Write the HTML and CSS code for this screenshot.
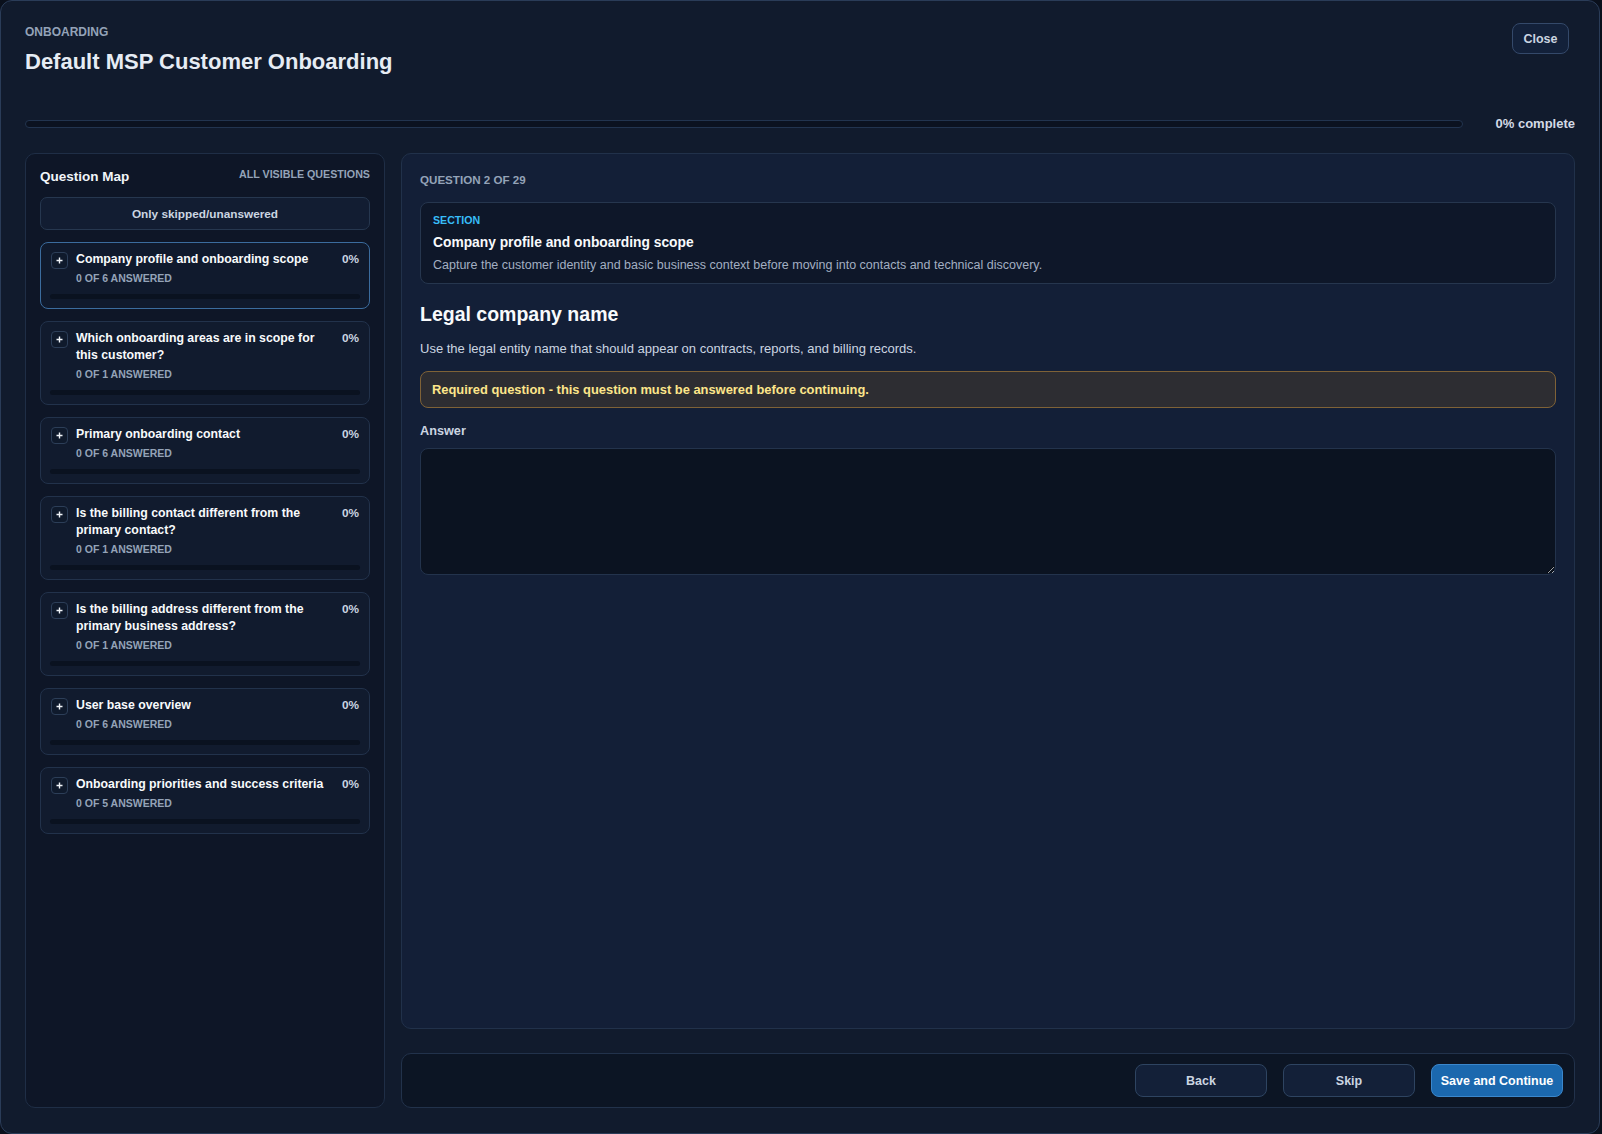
FILE: index.html
```html
<!DOCTYPE html>
<html lang="en">
<head>
<meta charset="utf-8">
<title>Default MSP Customer Onboarding</title>
<link rel="stylesheet" href="styles.css">
</head>
<body>
<div class="modal">
  <header class="modal-head">
    <div class="head-text">
      <div class="eyebrow">ONBOARDING</div>
      <h1 class="title">Default MSP Customer Onboarding</h1>
    </div>
    <button class="btn btn-close" type="button">Close</button>
  </header>

  <div class="progress-row">
    <div class="progress-track"><div class="progress-fill" style="width:0%"></div></div>
    <div class="progress-label">0% complete</div>
  </div>

  <div class="layout">
    <aside class="map">
      <div class="map-head">
        <span class="map-title">Question Map</span>
        <span class="map-scope">ALL VISIBLE QUESTIONS</span>
      </div>
      <button class="filter-btn" type="button">Only skipped/unanswered</button>
      <ul class="map-list">
        <li class="map-card active">
          <div class="card-row">
            <span class="plus"><svg width="7" height="7" viewBox="0 0 7 7"><path d="M3.5 0.5v6M0.5 3.5h6" stroke="#f1f5f9" stroke-width="1.4"/></svg></span>
            <div class="card-text">
              <div class="card-title">Company profile and onboarding scope</div>
              <div class="card-sub">0 OF 6 ANSWERED</div>
            </div>
            <span class="card-pct">0%</span>
          </div>
          <div class="card-bar"></div>
        </li>
        <li class="map-card">
          <div class="card-row">
            <span class="plus"><svg width="7" height="7" viewBox="0 0 7 7"><path d="M3.5 0.5v6M0.5 3.5h6" stroke="#f1f5f9" stroke-width="1.4"/></svg></span>
            <div class="card-text">
              <div class="card-title">Which onboarding areas are in scope for this customer?</div>
              <div class="card-sub">0 OF 1 ANSWERED</div>
            </div>
            <span class="card-pct">0%</span>
          </div>
          <div class="card-bar"></div>
        </li>
        <li class="map-card">
          <div class="card-row">
            <span class="plus"><svg width="7" height="7" viewBox="0 0 7 7"><path d="M3.5 0.5v6M0.5 3.5h6" stroke="#f1f5f9" stroke-width="1.4"/></svg></span>
            <div class="card-text">
              <div class="card-title">Primary onboarding contact</div>
              <div class="card-sub">0 OF 6 ANSWERED</div>
            </div>
            <span class="card-pct">0%</span>
          </div>
          <div class="card-bar"></div>
        </li>
        <li class="map-card">
          <div class="card-row">
            <span class="plus"><svg width="7" height="7" viewBox="0 0 7 7"><path d="M3.5 0.5v6M0.5 3.5h6" stroke="#f1f5f9" stroke-width="1.4"/></svg></span>
            <div class="card-text">
              <div class="card-title">Is the billing contact different from the primary contact?</div>
              <div class="card-sub">0 OF 1 ANSWERED</div>
            </div>
            <span class="card-pct">0%</span>
          </div>
          <div class="card-bar"></div>
        </li>
        <li class="map-card">
          <div class="card-row">
            <span class="plus"><svg width="7" height="7" viewBox="0 0 7 7"><path d="M3.5 0.5v6M0.5 3.5h6" stroke="#f1f5f9" stroke-width="1.4"/></svg></span>
            <div class="card-text">
              <div class="card-title">Is the billing address different from the primary business address?</div>
              <div class="card-sub">0 OF 1 ANSWERED</div>
            </div>
            <span class="card-pct">0%</span>
          </div>
          <div class="card-bar"></div>
        </li>
        <li class="map-card">
          <div class="card-row">
            <span class="plus"><svg width="7" height="7" viewBox="0 0 7 7"><path d="M3.5 0.5v6M0.5 3.5h6" stroke="#f1f5f9" stroke-width="1.4"/></svg></span>
            <div class="card-text">
              <div class="card-title">User base overview</div>
              <div class="card-sub">0 OF 6 ANSWERED</div>
            </div>
            <span class="card-pct">0%</span>
          </div>
          <div class="card-bar"></div>
        </li>
        <li class="map-card">
          <div class="card-row">
            <span class="plus"><svg width="7" height="7" viewBox="0 0 7 7"><path d="M3.5 0.5v6M0.5 3.5h6" stroke="#f1f5f9" stroke-width="1.4"/></svg></span>
            <div class="card-text">
              <div class="card-title">Onboarding priorities and success criteria</div>
              <div class="card-sub">0 OF 5 ANSWERED</div>
            </div>
            <span class="card-pct">0%</span>
          </div>
          <div class="card-bar"></div>
        </li>
      </ul>
    </aside>

    <section class="main-col">
      <div class="question-panel">
        <div class="q-counter">QUESTION 2 OF 29</div>
        <div class="section-box">
          <div class="section-label">SECTION</div>
          <div class="section-title">Company profile and onboarding scope</div>
          <div class="section-desc">Capture the customer identity and basic business context before moving into contacts and technical discovery.</div>
        </div>
        <h2 class="q-title">Legal company name</h2>
        <p class="q-desc">Use the legal entity name that should appear on contracts, reports, and billing records.</p>
        <div class="required">Required question - this question must be answered before continuing.</div>
        <label class="answer-label" for="answer">Answer</label>
        <textarea id="answer" class="answer-input"></textarea>
      </div>
      <div class="footer-bar">
        <button class="btn btn-secondary" type="button">Back</button>
        <button class="btn btn-secondary" type="button">Skip</button>
        <button class="btn btn-primary" type="button">Save and Continue</button>
      </div>
    </section>
  </div>
</div>
</body>
</html>
```

FILE: styles.css
```css
html, body {
  margin: 0;
  padding: 0;
  height: 100%;
  background: #0a101c;
}

body {
  font-family: "Liberation Sans", Arial, sans-serif;
  color: #e2e8f0;
}

.modal {
  box-sizing: border-box;
  width: 1600px;
  height: 1134px;
  border: 1px solid #2a3c58;
  border-radius: 12px;
  background: #111b2d;
  padding: 23px 24px 25px 24px;
  display: flex;
  flex-direction: column;
}

/* Header */
.modal-head {
  display: flex;
  justify-content: space-between;
  align-items: flex-start;
  height: 50px;
}

.eyebrow {
  font-size: 12px;
  font-weight: 700;
  line-height: 16px;
  color: #94a3b8;
}

.title {
  margin: 8px 0 0 0;
  font-size: 22px;
  font-weight: 700;
  line-height: 28px;
  color: #e6ecf4;
}

.btn {
  font-family: "Liberation Sans", Arial, sans-serif;
  font-weight: 700;
  cursor: pointer;
  box-sizing: border-box;
}

.btn-close {
  margin: -1px 6px 0 0;
  width: 57px;
  height: 31px;
  padding: 0;
  border: 1px solid #34496a;
  border-radius: 8px;
  background: #13213a;
  color: #cbd5e1;
  font-size: 12.5px;
}

/* Progress */
.progress-row {
  margin-top: 41px;
  display: flex;
  align-items: center;
  gap: 33px;
  height: 18px;
}

.progress-track {
  flex: 1;
  box-sizing: border-box;
  height: 8px;
  border: 1px solid #22344f;
  border-radius: 999px;
  background: #0b1220;
  overflow: hidden;
}

.progress-fill {
  height: 100%;
  background: #1d6fb8;
}

.progress-label {
  font-size: 13px;
  font-weight: 700;
  line-height: 18px;
  color: #d3dae5;
}

/* Layout */
.layout {
  flex: 1;
  min-height: 0;
  margin-top: 20px;
  display: grid;
  grid-template-columns: 360px 1fr;
  gap: 16px;
}

/* Question map */
.map {
  box-sizing: border-box;
  background: #0e1627;
  border: 1px solid #1f2e46;
  border-radius: 10px;
  padding: 14px;
}

.map-head {
  display: flex;
  justify-content: space-between;
  align-items: flex-start;
}

.map-title {
  font-size: 13.5px;
  font-weight: 700;
  line-height: 18px;
  color: #f1f5f9;
}

.map-scope {
  font-size: 10.7px;
  font-weight: 700;
  line-height: 13px;
  color: #94a3b8;
}

.filter-btn {
  display: block;
  width: 100%;
  height: 33px;
  margin-top: 11px;
  padding: 0;
  background: #121d32;
  border: 1px solid #26374f;
  border-radius: 7px;
  color: #cbd5e1;
  font-family: "Liberation Sans", Arial, sans-serif;
  font-size: 11.8px;
  font-weight: 700;
}

.map-list {
  list-style: none;
  margin: 12px 0 0 0;
  padding: 0;
  display: flex;
  flex-direction: column;
  gap: 12px;
}

.map-card {
  background: #111b2e;
  border: 1px solid #22324b;
  border-radius: 8px;
  padding: 8px 10px 9px 10px;
}

.map-card.active {
  border-color: #3b6c9e;
  background: #101a2d;
}

.card-row {
  display: flex;
  align-items: flex-start;
  gap: 8px;
}

.plus {
  flex: none;
  box-sizing: border-box;
  width: 17px;
  height: 17px;
  margin-top: 1px;
  border: 1px solid #2c3e58;
  border-radius: 4px;
  background: #0f1a2c;
  display: flex;
  align-items: center;
  justify-content: center;
}

.card-text {
  flex: 1;
  min-width: 0;
}

.card-title {
  font-size: 12.3px;
  font-weight: 700;
  line-height: 17px;
  color: #f8fafc;
}

.card-sub {
  margin-top: 3px;
  font-size: 10.5px;
  font-weight: 700;
  line-height: 14px;
  color: #94a3b8;
}

.card-pct {
  flex: none;
  font-size: 11.8px;
  font-weight: 700;
  line-height: 17px;
  color: #cbd5e1;
}

.card-bar {
  height: 5px;
  margin: 9px -1px 0 -1px;
  border-radius: 3px;
  background: #0a1220;
}

/* Main column */
.main-col {
  display: flex;
  flex-direction: column;
  gap: 24px;
  min-height: 0;
}

.question-panel {
  flex: 1;
  background: #131f37;
  border: 1px solid #21314a;
  border-radius: 10px;
  padding: 18px;
}

.q-counter {
  font-size: 11.6px;
  font-weight: 700;
  line-height: 15px;
  color: #94a3b8;
}

.section-box {
  margin-top: 15px;
  background: #0e1729;
  border: 1px solid #26364e;
  border-radius: 8px;
  padding: 10px 12px 9px 12px;
}

.section-label {
  font-size: 10.6px;
  font-weight: 700;
  line-height: 14px;
  color: #38bdf8;
}

.section-title {
  margin-top: 7px;
  font-size: 13.8px;
  font-weight: 700;
  line-height: 18px;
  color: #f8fafc;
}

.section-desc {
  margin-top: 5px;
  font-size: 12.5px;
  line-height: 17px;
  color: #a3afc2;
}

.q-title {
  margin: 18px 0 0 0;
  font-size: 19.5px;
  font-weight: 700;
  line-height: 24px;
  color: #f8fafc;
}

.q-desc {
  margin: 14px 0 0 0;
  font-size: 13px;
  line-height: 18px;
  color: #cbd5e1;
}

.required {
  margin-top: 13px;
  background: #2d2d32;
  border: 1px solid #7f6237;
  border-radius: 8px;
  padding: 9px 11px;
  font-size: 12.9px;
  font-weight: 700;
  line-height: 17px;
  color: #fde68a;
}

.answer-label {
  display: block;
  margin-top: 15px;
  font-size: 12.7px;
  font-weight: 700;
  line-height: 17px;
  color: #cbd5e1;
}

.answer-input {
  display: block;
  box-sizing: border-box;
  width: 100%;
  height: 127px;
  margin-top: 8px;
  background: #0b1321;
  border: 1px solid #23334c;
  border-radius: 8px;
  color: #e2e8f0;
  font-family: "Liberation Sans", Arial, sans-serif;
  font-size: 13px;
  padding: 8px 10px;
  resize: vertical;
  outline: none;
}

/* Footer */
.footer-bar {
  box-sizing: border-box;
  height: 55px;
  background: #0c1524;
  border: 1px solid #22324b;
  border-radius: 10px;
  padding: 10px 11px;
  display: flex;
  justify-content: flex-end;
  gap: 16px;
}

.btn-secondary,
.btn-primary {
  width: 132px;
  height: 33px;
  border-radius: 8px;
  font-size: 12.5px;
  padding: 0;
}

.btn-secondary {
  background: #132038;
  border: 1px solid #2e4461;
  color: #cbd5e1;
}

.btn-primary {
  background: #1b68ae;
  border: 1px solid #3b87cc;
  color: #ffffff;
}
```
